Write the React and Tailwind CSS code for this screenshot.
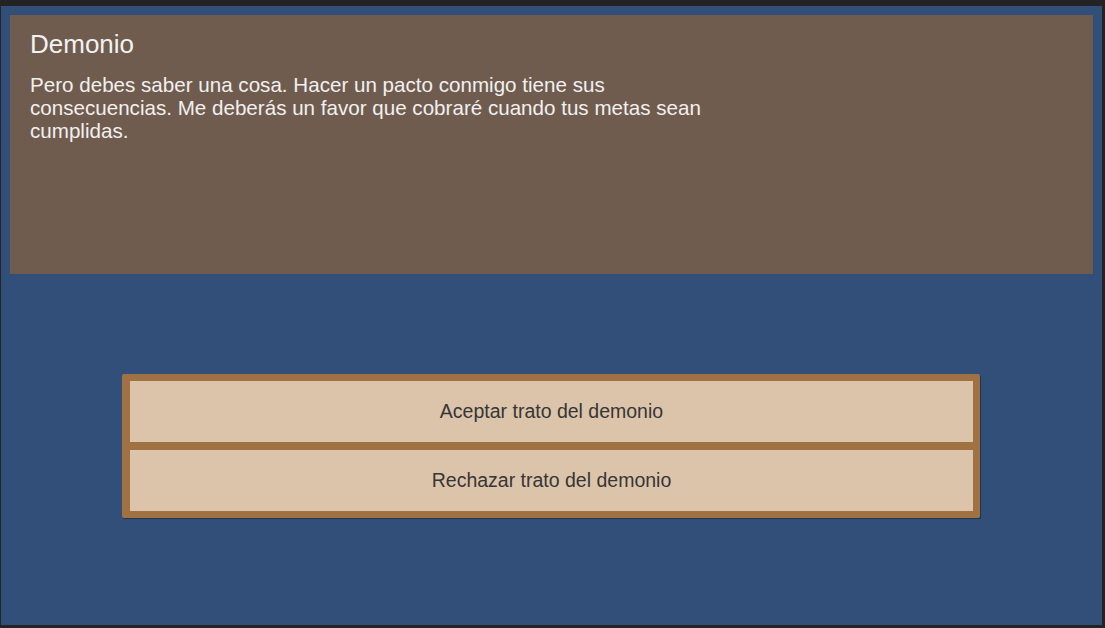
export default function App() {
  const choices = ['Aceptar trato del demonio', 'Rechazar trato del demonio'];

  return (
    <div
      className="w-[1105px] h-[628px] bg-[#232323] pt-[6px] pl-[1px] pr-[3px] pb-[3px] overflow-hidden"
      style={{ fontFamily: '"Liberation Sans", Arial, sans-serif' }}
    >
      <div className="h-full bg-[#314f79] p-[9px] flex flex-col">
        {/* dialogue box */}
        <div className="h-[259px] bg-[#705c4e] pl-[20px] pt-[13px]">
          <h1 className="text-[26px] leading-[32px] text-[#f2f2f2]">Demonio</h1>
          <p className="mt-[13px] w-[700px] text-[20.6px] leading-[23px] text-[#f0f0f0]">
            Pero debes saber una cosa. Hacer un pacto conmigo tiene sus consecuencias. Me deberás un favor que cobraré cuando tus metas sean cumplidas.
          </p>
        </div>

        {/* choices */}
        <div className="mt-[100px] ml-[112px] w-[858px] bg-[#a07143] rounded-[2px] pt-[7px] pb-[7px] pl-[8px] pr-[7px] flex flex-col gap-[8px] shadow-[1px_1px_1px_rgba(0,0,0,0.35)]">
          {choices.map((c) => (
            <button
              key={c}
              className="h-[61px] bg-[#dcc4aa] text-[19.5px] text-[#363636] flex items-center justify-center"
            >
              {c}
            </button>
          ))}
        </div>
      </div>
    </div>
  );
}
